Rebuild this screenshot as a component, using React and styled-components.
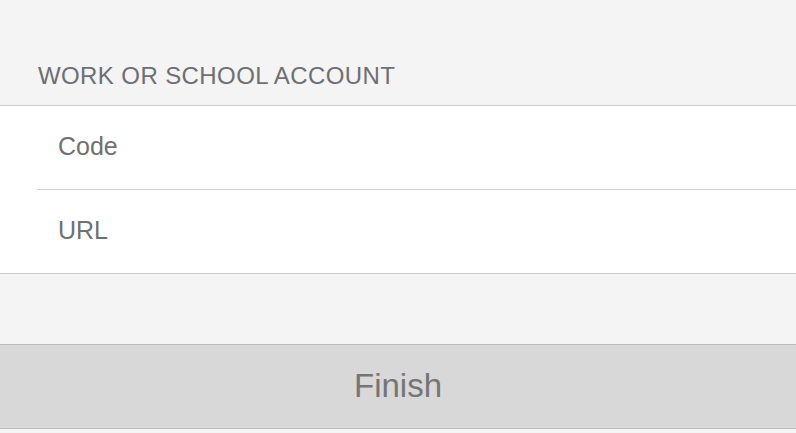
import React from "react";
import styled, { createGlobalStyle } from "styled-components";

const Global = createGlobalStyle`
  html, body { margin: 0; padding: 0; background: #f4f4f4; }
  body { font-family: "Liberation Sans", Arial, sans-serif; }
`;

const Page = styled.div`
  width: 796px;
  height: 433px;
  background: #f4f4f4;
  display: flex;
  flex-direction: column;
  overflow: hidden;
`;

const SectionHeader = styled.div`
  height: 106px;
  box-sizing: border-box;
  display: flex;
  align-items: flex-end;
  padding: 0 0 15px 38px;
  font-size: 24px;
  line-height: 28px;
  letter-spacing: 0.4px;
  color: #6e6e73;
  border-bottom: 1px solid #cbcbcb;
`;

const Group = styled.div`
  background: #ffffff;
  border-bottom: 1px solid #cbcbcb;
  display: flex;
  flex-direction: column;
`;

const Row = styled.div`
  height: ${(p) => (p.$last ? 83 : 84)}px;
  box-sizing: border-box;
  margin-left: 37px;
  padding: 26px 0 0 21px;
  font-size: 25px;
  line-height: 28px;
  color: #707070;
  border-bottom: ${(p) => (p.$last ? "none" : "1px solid #cfcfcf")};
`;

const Spacer = styled.div`
  height: 70px;
`;

const FinishButton = styled.button`
  height: 85px;
  box-sizing: border-box;
  width: 100%;
  margin: 0;
  padding: 0 0 2px;
  background: #d8d8d8;
  border: none;
  border-top: 1px solid #bcbcbc;
  border-bottom: 1px solid #bcbcbc;
  font-family: "Liberation Sans", Arial, sans-serif;
  font-size: 33px;
  color: #757575;
  display: flex;
  align-items: center;
  justify-content: center;
`;

export default function App() {
  return (
    <>
      <Global />
      <Page>
        <SectionHeader>WORK OR SCHOOL ACCOUNT</SectionHeader>
        <Group>
          <Row>Code</Row>
          <Row $last>URL</Row>
        </Group>
        <Spacer />
        <FinishButton>Finish</FinishButton>
      </Page>
    </>
  );
}
